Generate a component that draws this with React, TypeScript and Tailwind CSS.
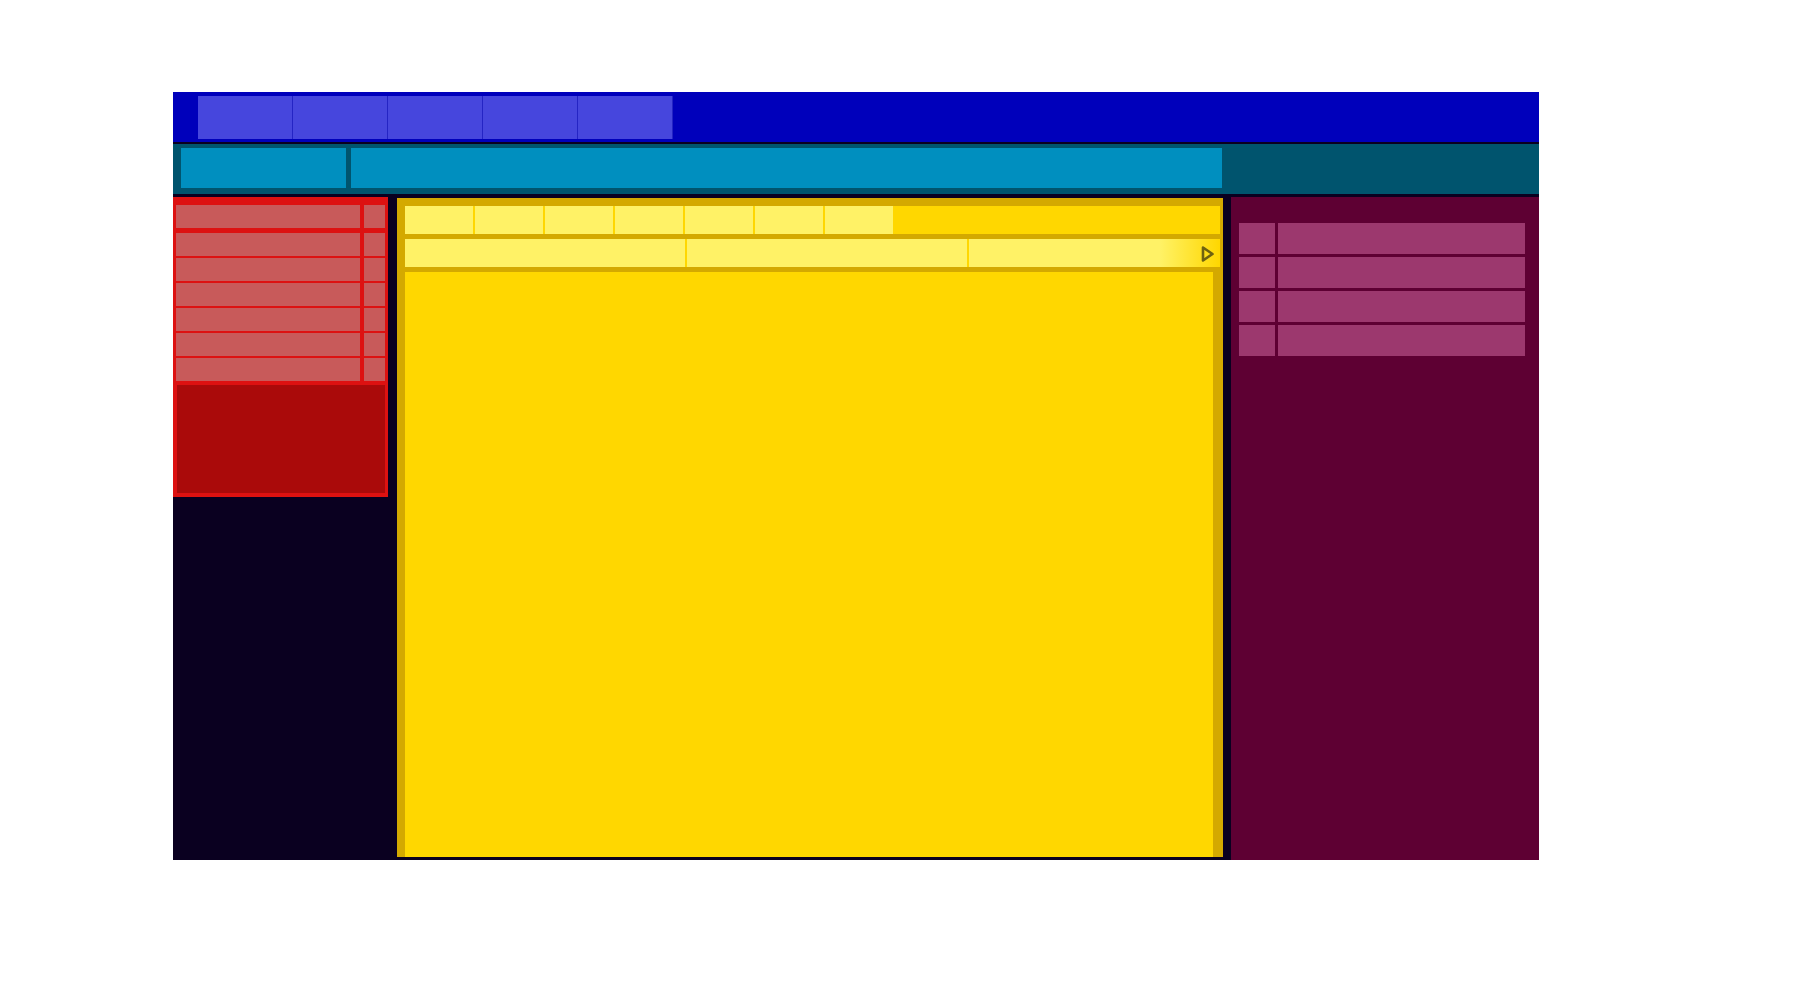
export default function App() {
  const redRows = [0, 1, 2, 3, 4, 5];
  const yTabs = [0, 1, 2, 3, 4, 5, 6];
  const pinkRows = [0, 1, 2, 3];
  return (
    <div className="min-h-screen bg-white pl-[173px] pt-[92px]">
      <div className="flex w-[1366px] flex-col bg-[#0a0020]">
        {/* Header */}
        <div className="flex h-[50px] items-start bg-[#0000bb] pl-[25px] pt-[4px]">
          {[0, 1, 2, 3, 4].map((i) => (
            <div key={i} className="h-[43px] w-[95px] border-r border-[#2424c4] bg-[#4646dd]" />
          ))}
        </div>
        {/* Teal bar */}
        <div className="mt-[2px] flex h-[50px] items-start gap-[5px] bg-[#00546e] pl-[8px] pt-[4px]">
          <div className="h-[40px] w-[165px] bg-[#008fbf]" />
          <div className="h-[40px] w-[871px] bg-[#008fbf]" />
        </div>
        {/* Content */}
        <div className="mt-[3px] flex h-[663px] items-start">
          {/* Left column */}
          <div className="w-[224px] shrink-0">
            <div className="flex h-[300px] w-[215px] flex-col bg-[#dd1111] px-[3px] pb-[4px] pt-[8px]">
              <div className="flex h-[23px] gap-[4px]">
                <div className="w-[184px] bg-[#c85a5a]" />
                <div className="flex-1 bg-[#c85a5a]" />
              </div>
              <div className="mt-[5px] flex flex-col gap-[2px]">
                {redRows.map((i) => (
                  <div key={i} className="flex h-[23px] gap-[4px]">
                    <div className="w-[184px] bg-[#c85a5a]" />
                    <div className="flex-1 bg-[#c85a5a]" />
                  </div>
                ))}
              </div>
              <div className="ml-[1px] mt-[4px] h-[108px] bg-[#aa0a0a]" />
            </div>
          </div>
          {/* Yellow panel */}
          <div className="mt-[1px] flex h-[659px] w-[826px] shrink-0 flex-col bg-[#d4a900] pl-[8px] pr-[3px] pt-[8px]">
            <div className="flex h-[28px] gap-[2px] bg-[#ffd700]">
              {yTabs.map((i) => (
                <div key={i} className="w-[68px] bg-[#fff266]" />
              ))}
            </div>
            <div className="relative mt-[5px] flex h-[28px] gap-[2px] overflow-hidden bg-[#ffd700]">
              {[0, 1, 2].map((i) => (
                <div key={i} className="w-[280px] shrink-0 bg-[#fff266]" />
              ))}
              <div className="absolute right-0 top-0 h-full w-[60px] bg-linear-to-r from-[#fff26600] to-[#ffd700]" />
              <svg
                className="absolute right-[4px] top-[6px]"
                width="16"
                height="18"
                viewBox="0 0 16 18"
                fill="none"
              >
                <path
                  d="M3 2.5 L12.5 9 L3 15.5 Z"
                  stroke="#6f6210"
                  strokeWidth="2.6"
                  strokeLinejoin="round"
                  strokeLinecap="round"
                />
              </svg>
            </div>
            <div className="mr-[7px] mt-[5px] flex-1 bg-[#ffd700]" />
          </div>
          {/* Maroon panel */}
          <div className="ml-[8px] h-[663px] w-[308px] shrink-0 bg-[#5e0033] pl-[8px] pr-[14px] pt-[26px]">
            <div className="flex flex-col gap-[3px]">
              {pinkRows.map((i) => (
                <div key={i} className="flex h-[31px] gap-[3px]">
                  <div className="w-[36px] bg-[#9c386e]" />
                  <div className="flex-1 bg-[#9c386e]" />
                </div>
              ))}
            </div>
          </div>
        </div>
      </div>
    </div>
  );
}
